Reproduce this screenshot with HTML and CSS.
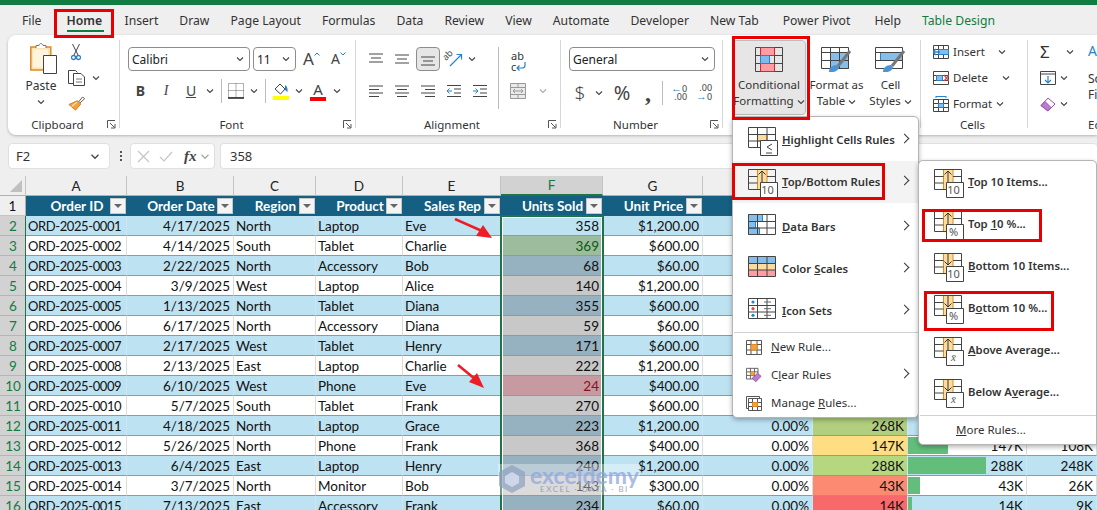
FILE: index.html
```html
<!DOCTYPE html>
<html>
<head>
  <meta charset="utf-8">
  <title>Conditional Formatting</title>
  <link rel="stylesheet" href="styles.css">
</head>
<body>
<svg class="defs" width="0" height="0">
  <defs>
    <symbol id="chev" viewBox="0 0 8 6"><path d="M1 1.5 4 4.5 7 1.5" fill="none" stroke="#444" stroke-width="1.1"/></symbol>
    <symbol id="launch" viewBox="0 0 9 9"><path d="M.5 8V.5H8M3 3l4.5 4.5M4 8h4V4" fill="none" stroke="#555"/></symbol>
    <symbol id="lines-left" viewBox="0 0 16 12"><path d="M1 1h14M1 4.5h10M1 8h14M1 11.500h10" stroke="#444"/></symbol>
    <symbol id="lines-center" viewBox="0 0 16 12"><path d="M1 1h14M3 4.500h10M1 8h14M3 11.500h10" stroke="#444"/></symbol>
    <symbol id="lines-right" viewBox="0 0 16 12"><path d="M1 1h14M5 4.500h10M1 8h14M5 11.500h10" stroke="#444"/></symbol>
    <symbol id="grid" viewBox="0 0 30 30"><path d="M.5.5h27v20H.5zM.5 7.500h27M.5 14h27M9.500.5v20M19 .5v20" fill="none" stroke="#444"/></symbol>
    <symbol id="top-col" viewBox="0 0 30 30"><path d="M9.500.5h9.500v20H9.500z" fill="#fbdc9c" stroke="#e78a1e"/><path d="M.5.5h27v20H.5zM.5 7.500h9M.5 14h9M19 7.500h8M19 14h8" fill="none" stroke="#444"/><path d="M14 13V2M10.500 5.500 14 2l3.500 3.500" fill="none" stroke="#333"/><path d="M12.500 13.500h17v15h-17z" fill="#fff" stroke="#444"/></symbol>
    <symbol id="bottom-col" viewBox="0 0 30 30"><path d="M9.500.5h9.500v20H9.500z" fill="#fbdc9c" stroke="#e78a1e"/><path d="M.5.5h27v20H.5zM.5 7.500h9M.5 14h9M19 7.500h8M19 14h8" fill="none" stroke="#444"/><path d="M14 1v11M10.500 8.500 14 12l3.500-3.500" fill="none" stroke="#333"/><path d="M12.500 13.500h17v15h-17z" fill="#fff" stroke="#444"/></symbol>
  </defs>
</svg>

<div class="topbar"></div>

<nav class="tabs">
  <span>File</span>
  <span class="tab-on">Home</span>
  <span>Insert</span>
  <span>Draw</span>
  <span>Page Layout</span>
  <span>Formulas</span>
  <span>Data</span>
  <span>Review</span>
  <span>View</span>
  <span>Automate</span>
  <span>Developer</span>
  <span>New Tab</span>
  <span class="tab-far">Power Pivot</span>
  <span class="tab-far">Help</span>
  <span class="tab-green">Table Design</span>
</nav>

<div class="ribbon">
  <!-- Clipboard -->
  <section class="group g-clip">
    <div class="group-body clip-body">
      <div class="paste">
        <svg class="paste-ico" width="27" height="31" viewBox="0 0 27 31">
          <path d="M.8 4h20v23H.8z" fill="#fbe3b8" stroke="#e08a23" stroke-width="1.500"/>
          <path d="M3 6.500h15v18H3z" fill="#fff4dd"/>
          <path d="M6 5V2.500h3C9 0 13 0 13 2.500h3V5" fill="#fff" stroke="#777"/>
          <path d="M13.500 12.500h13v18h-13z" fill="#fff" stroke="#444"/>
        </svg>
        <span class="paste-text">Paste</span>
        <svg class="chev" width="8" height="6"><use href="#chev"/></svg>
      </div>
      <div class="clip-tools">
        <div class="tool">
          <svg class="scissors" width="10" height="17" viewBox="0 0 10 17"><path d="M1.500 0l5.500 11M8.500 0 3 11" stroke="#444" fill="none"/><circle cx="2.500" cy="13.500" r="2" fill="none" stroke="#2a82c9" stroke-width="1.300"/><circle cx="7.500" cy="13.500" r="2" fill="none" stroke="#2a82c9" stroke-width="1.300"/></svg>
        </div>
        <div class="tool">
          <svg width="17" height="16" viewBox="0 0 17 16"><path d="M5 13.500H.5V.5h7l2 2" fill="none" stroke="#444"/><path d="M5.500 3.500h7.500l3.500 3.500v8.500h-11z" fill="#fff" stroke="#444"/><path d="M8 9h6M8 12h6" stroke="#777"/></svg>
          <svg class="chev" width="8" height="6"><use href="#chev"/></svg>
        </div>
        <div class="tool">
          <svg width="17" height="16" viewBox="0 0 18 16"><path d="M11 6 15.500.5 17.500 2.500 12 7.500z" fill="#fff" stroke="#555"/><path d="M10 4.500 13.500 8 8 14.500 1 8.500z" fill="#f3a33c" stroke="#d9791a"/><path d="M4 10.500 9.500 6" stroke="#fff"/></svg>
        </div>
      </div>
    </div>
    <div class="group-label"><span>Clipboard</span><svg width="9" height="9"><use href="#launch"/></svg></div>
  </section>
  <i class="sep"></i>

  <!-- Font -->
  <section class="group g-font">
    <div class="group-body font-body">
      <div class="font-row">
        <div class="combo combo-font"><span>Calibri</span><svg width="8" height="6"><use href="#chev"/></svg></div>
        <div class="combo combo-size"><span>11</span><svg width="8" height="6"><use href="#chev"/></svg></div>
        <span class="grow">A<svg width="6" height="4" viewBox="0 0 6 4"><path d="M.5 3.500 3 1l2.500 2.500" fill="none" stroke="#2a82c9"/></svg></span>
        <span class="shrink">A<svg width="6" height="4" viewBox="0 0 6 4"><path d="M.5.5 3 3 5.500.5" fill="none" stroke="#2a82c9"/></svg></span>
      </div>
      <div class="font-tools">
        <b class="ft">B</b>
        <i class="ft ft-i">I</i>
        <u class="ft ft-u">U</u>
        <svg class="ft-c" width="8" height="6"><use href="#chev"/></svg>
        <i class="vsep"></i>
        <svg class="ft-c" width="16" height="16" viewBox="0 0 16 16"><path d="M.5.5h15v14H.5z" fill="none" stroke="#666" stroke-dasharray="1 1"/><path d="M8 .5v14M.5 7.500h15" stroke="#666" stroke-dasharray="1 1"/><path d="M0 15h16" stroke="#222" stroke-width="1.500"/></svg>
        <svg class="ft-c" width="8" height="6"><use href="#chev"/></svg>
        <i class="vsep"></i>
        <svg class="ft-c" width="16" height="18" viewBox="0 0 16 18"><path d="M2 7 7 2l5 5-4.500 5z" fill="#fff" stroke="#444"/><path d="M12 3c2 1 3 4 2.500 7L12 8z" fill="#2a82c9"/><rect y="14" width="16" height="4" fill="#ffff00"/></svg>
        <svg class="ft-c" width="8" height="6"><use href="#chev"/></svg>
        <span class="ft-color">A</span>
        <svg class="ft-c" width="8" height="6"><use href="#chev"/></svg>
      </div>
    </div>
    <div class="group-label"><span>Font</span><svg width="9" height="9"><use href="#launch"/></svg></div>
  </section>
  <i class="sep"></i>

  <!-- Alignment -->
  <section class="group g-align">
    <div class="group-body align-body">
      <div class="align-grid">
        <div class="ai ai-top"><svg width="16" height="10" viewBox="0 0 16 10"><path d="M1 1h14M3 5h10M1 9h14" stroke="#444"/></svg></div>
        <div class="ai"><svg width="16" height="10" viewBox="0 0 16 10"><path d="M1 1h14M3 5h10M1 9h14" stroke="#444"/></svg></div>
        <div class="ai ai-on"><svg width="16" height="10" viewBox="0 0 16 10"><path d="M1 1h14M3 5h10M1 9h14" stroke="#444"/></svg></div>
        <div class="ai ai-wide">
          <svg class="orient" width="18" height="16" viewBox="0 0 18 16"><path d="M5 15 16 4M11.500 3.500h5v5" fill="none" stroke="#2a82c9" stroke-width="1.200"/><text x="1" y="10" class="svg-ab" transform="rotate(-45 1 10)">ab</text></svg>
          <svg width="8" height="6"><use href="#chev"/></svg>
        </div>
        <div class="ai"><svg width="16" height="12"><use href="#lines-left"/></svg></div>
        <div class="ai"><svg width="16" height="12"><use href="#lines-center"/></svg></div>
        <div class="ai"><svg width="16" height="12"><use href="#lines-right"/></svg></div>
        <div class="ai"><svg width="16" height="12" viewBox="0 0 16 12"><path d="M1 .5h14M8 4h7M8 8h7M1 11.500h14" stroke="#444"/><path d="M6 6H1M3.500 3.500 1 6l2.500 2.500" fill="none" stroke="#2a82c9"/></svg></div>
        <div class="ai"><svg width="16" height="12" viewBox="0 0 16 12"><path d="M1 .5h14M8 4h7M8 8h7M1 11.500h14" stroke="#444"/><path d="M1 6h5M3.500 3.500 6 6 3.500 8.500" fill="none" stroke="#2a82c9"/></svg></div>
      </div>
      <i class="vsep vsep-tall"></i>
      <div class="wrap-col">
        <div class="wrap-txt">ab<br>c<svg width="10" height="10" viewBox="0 0 10 10"><path d="M9 1v3.500C9 6.500 7.500 7 6 7H1M3.500 4.500 1 7l2.500 2.500" fill="none" stroke="#2a82c9" stroke-width="1.200"/></svg></div>
        <div class="merge">
          <svg width="16" height="16" viewBox="0 0 16 16"><path d="M.5.5h15v15H.5zM.5 4.500h15M.5 11.500h15" fill="#eaeaea" stroke="#999"/><path d="M8 .5v4M8 11.500v4" stroke="#999"/><path d="M3 8h10M5 6 3 8l2 2M11 6l2 2-2 2" fill="none" stroke="#999"/></svg>
          <svg width="8" height="6" class="faded"><use href="#chev"/></svg>
        </div>
      </div>
    </div>
    <div class="group-label"><span>Alignment</span><svg width="9" height="9"><use href="#launch"/></svg></div>
  </section>
  <i class="sep"></i>

  <!-- Number -->
  <section class="group g-number">
    <div class="group-body font-body">
      <div class="combo combo-num"><span>General</span><svg width="8" height="6"><use href="#chev"/></svg></div>
      <div class="num-tools">
        <span class="nt nt-big">$</span>
        <svg width="8" height="6"><use href="#chev"/></svg>
        <span class="nt nt-pct">%</span>
        <span class="nt nt-comma">,</span>
        <i class="vsep"></i>
        <span class="dec"><span><em>&larr;</em>0</span><span>.00</span></span>
        <span class="dec"><span>.00</span><span><em>&rarr;</em>0</span></span>
      </div>
    </div>
    <div class="group-label"><span>Number</span><svg width="9" height="9"><use href="#launch"/></svg></div>
  </section>
  <i class="sep"></i>

  <!-- Styles -->
  <section class="group g-styles">
    <div class="styles-body">
      <div class="big-btn big-on">
        <svg width="28" height="25" viewBox="0 0 28 25">
          <path d="M5.500 .5h14v8h-14z" fill="#ff9da3"/>
          <path d="M5.500 8.500h9v8h-9z" fill="#7fbaec"/>
          <path d="M5.500 16.500h14v8h-14z" fill="#ff9da3"/>
          <path d="M.5.500h27v24H.5zM.5 8.500h27M.5 16.500h27M5.500 .5v24M19.500 .5v24" fill="none" stroke="#444"/>
          <path d="M5.500 .5h14v8h-14zM5.500 16.500h14v8h-14z" fill="none" stroke="#d8232a"/>
          <path d="M5.500 8.500h9v8h-9z" fill="none" stroke="#2a82c9"/>
        </svg>
        <span class="big-text">Conditional<br>Formatting <svg width="8" height="6"><use href="#chev"/></svg></span>
      </div>
      <div class="big-btn big-fat">
        <svg width="32" height="25" viewBox="0 0 32 25">
          <path d="M9.500 5.500h18v16h-18z" fill="#85bdeb" stroke="#2a82c9"/>
          <path d="M.5.500h27v21H.5zM.5 5.500h27M.5 13.500h27M9.500 .5v21M18.500 .5v21" fill="none" stroke="#444"/>
          <path d="M17 19 29 4" stroke="#777" stroke-width="3"/><path d="M8 25c0-4 3-7 8-7l2 2c0 3-4 6-10 5z" fill="#4a94d6"/>
        </svg>
        <span class="big-text">Format as<br>Table <svg width="8" height="6"><use href="#chev"/></svg></span>
      </div>
      <div class="big-btn big-fat">
        <svg width="32" height="25" viewBox="0 0 32 25">
          <path d="M5.500 5.500h22v8h-22z" fill="#85bdeb" stroke="#2a82c9"/>
          <path d="M.5.500h27v21H.5zM.5 5.500h27M.5 13.500h27" fill="none" stroke="#444"/>
          <path d="M17 19 29 4" stroke="#777" stroke-width="3"/><path d="M8 25c0-4 3-7 8-7l2 2c0 3-4 6-10 5z" fill="#4a94d6"/>
        </svg>
        <span class="big-text">Cell<br>Styles <svg width="8" height="6"><use href="#chev"/></svg></span>
      </div>
    </div>
    <div class="group-label"></div>
  </section>
  <i class="sep"></i>

  <!-- Cells -->
  <section class="group g-cells">
    <div class="cells-body">
      <div class="cell-row">
        <svg width="16" height="14" viewBox="0 0 16 14"><path d="M.5.5h15v13H.5zM.5 4.500h15M.5 9.500h15M5.500 .5v13M10.500 .5v13" fill="#fff" stroke="#444"/><path d="M5.500 4.500h10v5h-10z" fill="#85bdeb" stroke="#2a82c9"/><path d="M7 7H0M3 4 0 7l3 3" fill="none" stroke="#2a82c9" stroke-width="1.300"/></svg>
        <span>Insert</span><svg class="cell-chev" width="8" height="6"><use href="#chev"/></svg>
      </div>
      <div class="cell-row">
        <svg width="16" height="14" viewBox="0 0 16 14"><path d="M.5.5h15v13H.5zM.5 4.500h15M.5 9.500h15" fill="#fff" stroke="#444"/><path d="M3.500 4.500h6v5h-6z" fill="#85bdeb" stroke="#2a82c9"/><path d="M11 4l5 6M16 4l-5 6" stroke="#e0484d" stroke-width="1.200"/></svg>
        <span>Delete</span><svg class="cell-chev cell-chev-far" width="8" height="6"><use href="#chev"/></svg>
      </div>
      <div class="cell-row">
        <svg width="16" height="16" viewBox="0 0 16 16"><path d="M3 .5h10M3 0v2M13 0v2" stroke="#2a82c9"/><path d="M.5 3.500h15v12H.5zM.5 7.500h15M.5 11.500h15M5.500 3.500v12M10.500 3.500v12" fill="#fff" stroke="#444"/><path d="M5.500 7.500h5v4h-5z" fill="#85bdeb" stroke="#2a82c9"/></svg>
        <span>Format</span><svg class="cell-chev-near" width="8" height="6"><use href="#chev"/></svg>
      </div>
    </div>
    <div class="group-label group-label-plain"><span>Cells</span></div>
  </section>
  <i class="sep"></i>

  <!-- Editing, cut off by the window -->
  <section class="group g-edit">
    <div class="edit-body">
      <div class="edit-col">
        <div class="edit-row"><span class="sigma">&Sigma;</span><svg width="8" height="6"><use href="#chev"/></svg></div>
        <div class="edit-row">
          <svg width="16" height="14" viewBox="0 0 16 14"><path d="M.5.5h15v13H.5zM.5 3h15" fill="#fff" stroke="#444"/><path d="M8 5v7M5 9l3 3 3-3" fill="none" stroke="#2a82c9" stroke-width="1.200"/></svg>
          <svg width="8" height="6"><use href="#chev"/></svg>
        </div>
        <div class="edit-row">
          <svg width="16" height="15" viewBox="0 0 16 15"><path d="M1 8.500 8 1l7 6-7 7z" fill="#fff" stroke="#a24cb8"/><path d="M1 8.500 5 4.500l6 6L8 14z" fill="#b77fcb" stroke="#a24cb8"/></svg>
          <svg width="8" height="6"><use href="#chev"/></svg>
        </div>
      </div>
      <div class="sort-col">
        <span class="sort-a">A</span>
        <span class="sort-text">So<br>Fi</span>
      </div>
    </div>
    <div class="group-label group-label-edit"><span>Ed</span></div>
  </section>
</div>

<div class="formula-bar">
  <div class="name-box"><span>F2</span><svg width="10" height="7"><use href="#chev"/></svg></div>
  <div class="dots"><i></i><i></i><i></i></div>
  <div class="fx-box">
    <svg width="13" height="13" viewBox="0 0 13 13"><path d="M1 1l11 11M12 1 1 12" stroke="#c6c6c6" stroke-width="1.200"/></svg>
    <svg width="14" height="11" viewBox="0 0 14 11"><path d="M1 6l4 4 8-9" fill="none" stroke="#c6c6c6" stroke-width="1.200"/></svg>
    <span class="fx">fx</span>
    <svg width="10" height="7" class="faded"><use href="#chev"/></svg>
  </div>
  <div class="formula-input">358</div>
</div>

<table class="sheet">
  <colgroup>
    <col class="c-head"><col class="c-a"><col class="c-b"><col class="c-c"><col class="c-d"><col class="c-e">
    <col class="c-f"><col class="c-g"><col class="c-h"><col class="c-i"><col class="c-j"><col class="c-k">
  </colgroup>
  <thead>
    <tr class="letters">
      <th class="corner"><span></span></th>
      <th>A</th><th>B</th><th>C</th><th>D</th><th>E</th><th class="sel-col">F</th><th>G</th><th>H</th><th>I</th><th>J</th><th>K</th>
    </tr>
    <tr class="titles">
      <th class="rownum rownum-plain">1</th>
      <th><div class="tt"><span>Order ID</span><b class="fb"></b></div></th>
      <th><div class="tt"><span>Order Date</span><b class="fb"></b></div></th>
      <th><div class="tt"><span>Region</span><b class="fb"></b></div></th>
      <th><div class="tt"><span>Product</span><b class="fb"></b></div></th>
      <th><div class="tt"><span>Sales Rep</span><b class="fb"></b></div></th>
      <th><div class="tt"><span>Units Sold</span><b class="fb"></b></div></th>
      <th><div class="tt"><span>Unit Price</span><b class="fb"></b></div></th>
      <th></th><th></th><th></th><th></th>
    </tr>
  </thead>
  <tbody>
    <tr class="band"><th class="rownum">2</th><td class="id">ORD-2025-0001</td><td class="r">4/17/2025</td><td>North</td><td>Laptop</td><td>Eve</td><td class="r u-active">358</td><td class="r">$1,200.00</td><td></td><td></td><td></td><td></td></tr>
    <tr><th class="rownum">3</th><td class="id">ORD-2025-0002</td><td class="r">4/14/2025</td><td>South</td><td>Tablet</td><td>Charlie</td><td class="r u-top">369</td><td class="r">$600.00</td><td></td><td></td><td></td><td></td></tr>
    <tr class="band"><th class="rownum">4</th><td class="id">ORD-2025-0003</td><td class="r">2/22/2025</td><td>North</td><td>Accessory</td><td>Bob</td><td class="r u">68</td><td class="r">$60.00</td><td></td><td></td><td></td><td></td></tr>
    <tr><th class="rownum">5</th><td class="id">ORD-2025-0004</td><td class="r">3/9/2025</td><td>West</td><td>Laptop</td><td>Alice</td><td class="r u">140</td><td class="r">$1,200.00</td><td></td><td></td><td></td><td></td></tr>
    <tr class="band"><th class="rownum">6</th><td class="id">ORD-2025-0005</td><td class="r">1/13/2025</td><td>North</td><td>Tablet</td><td>Diana</td><td class="r u">355</td><td class="r">$600.00</td><td></td><td></td><td></td><td></td></tr>
    <tr><th class="rownum">7</th><td class="id">ORD-2025-0006</td><td class="r">6/17/2025</td><td>North</td><td>Accessory</td><td>Diana</td><td class="r u">59</td><td class="r">$60.00</td><td></td><td></td><td></td><td></td></tr>
    <tr class="band"><th class="rownum">8</th><td class="id">ORD-2025-0007</td><td class="r">2/17/2025</td><td>West</td><td>Tablet</td><td>Henry</td><td class="r u">171</td><td class="r">$600.00</td><td></td><td></td><td></td><td></td></tr>
    <tr><th class="rownum">9</th><td class="id">ORD-2025-0008</td><td class="r">2/13/2025</td><td>East</td><td>Laptop</td><td>Charlie</td><td class="r u">222</td><td class="r">$1,200.00</td><td></td><td></td><td></td><td></td></tr>
    <tr class="band"><th class="rownum">10</th><td class="id">ORD-2025-0009</td><td class="r">6/10/2025</td><td>West</td><td>Phone</td><td>Eve</td><td class="r u-low">24</td><td class="r">$400.00</td><td></td><td></td><td></td><td></td></tr>
    <tr><th class="rownum">11</th><td class="id">ORD-2025-0010</td><td class="r">5/7/2025</td><td>South</td><td>Tablet</td><td>Frank</td><td class="r u">270</td><td class="r">$600.00</td><td></td><td></td><td></td><td></td></tr>
    <tr class="band"><th class="rownum">12</th><td class="id">ORD-2025-0011</td><td class="r">4/18/2025</td><td>North</td><td>Laptop</td><td>Grace</td><td class="r u">223</td><td class="r">$1,200.00</td><td class="r">0.00%</td><td class="r s-268">268K</td><td class="r"></td><td class="r"></td></tr>
    <tr><th class="rownum">13</th><td class="id">ORD-2025-0012</td><td class="r">5/26/2025</td><td>North</td><td>Phone</td><td>Frank</td><td class="r u">368</td><td class="r">$400.00</td><td class="r">0.00%</td><td class="r s-147">147K</td><td class="r bar" style="background-size: 40px 17px">147K</td><td class="r">108K</td></tr>
    <tr class="band"><th class="rownum">14</th><td class="id">ORD-2025-0013</td><td class="r">6/4/2025</td><td>East</td><td>Laptop</td><td>Henry</td><td class="r u">240</td><td class="r">$1,200.00</td><td class="r">0.00%</td><td class="r s-288">288K</td><td class="r bar" style="background-size: 78px 17px">288K</td><td class="r">248K</td></tr>
    <tr><th class="rownum">15</th><td class="id">ORD-2025-0014</td><td class="r">3/7/2025</td><td>North</td><td>Monitor</td><td>Bob</td><td class="r u">143</td><td class="r">$300.00</td><td class="r">0.00%</td><td class="r s-43">43K</td><td class="r bar" style="background-size: 12px 17px">43K</td><td class="r">26K</td></tr>
    <tr class="band"><th class="rownum">16</th><td class="id">ORD-2025-0015</td><td class="r">7/13/2025</td><td>East</td><td>Accessory</td><td>Frank</td><td class="r u">234</td><td class="r">$60.00</td><td class="r">0.00%</td><td class="r s-14">14K</td><td class="r bar" style="background-size: 4px 17px">14K</td><td class="r">9K</td></tr>
  </tbody>
</table>

<!-- selection frame around column F -->
<div class="selection"></div>
<div class="row-edge"></div>

<!-- watermark -->
<div class="watermark">
  <svg width="28" height="30" viewBox="0 0 28 30"><path d="M14 1 27 8v14l-13 7L1 22V8z" fill="#8fa0bd" opacity=".7"/><path d="M14 8l7 4v7l-7 4-7-4v-7z" fill="#d7e1f1" opacity=".8"/></svg>
  <div class="wm-text"><span class="wm-name">exceldemy</span><span class="wm-sub">EXCEL &middot; DATA &middot; BI</span></div>
</div>

<!-- red arrows drawn on the screenshot -->
<svg class="arrow arrow-one" width="42" height="22" viewBox="0 0 42 22"><path d="M1 1 28 13" stroke="#ee1c25" stroke-width="2.500"/><path d="M38 20 22 18 29 7z" fill="#ee1c25"/></svg>
<svg class="arrow arrow-two" width="30" height="26" viewBox="0 0 30 26"><path d="M1 1 18 15" stroke="#ee1c25" stroke-width="2.500"/><path d="M27 24 12 18 20 9z" fill="#ee1c25"/></svg>

<!-- Conditional Formatting menu -->
<div class="menu">
  <div class="m-item">
    <svg class="m-ico" width="32" height="30" viewBox="0 0 30 30"><path d="M9.500 7.500h9.500V14H9.500z" fill="#fbdc9c" stroke="#e78a1e"/><use href="#grid"/><path d="M12.500 13.500h17v15h-17z" fill="#fff" stroke="#444"/><path d="M24 17l-5 3 5 3M18 26h6" fill="none" stroke="#444"/></svg>
    <span class="m-text"><u>H</u>ighlight Cells Rules</span><span class="m-arrow"></span>
  </div>
  <div class="m-item m-hover">
    <svg class="m-ico" width="32" height="30"><use href="#top-col"/></svg><b class="badge">10</b>
    <span class="m-text"><u>T</u>op/Bottom Rules</span><span class="m-arrow"></span>
  </div>
  <div class="m-item">
    <svg class="m-ico" width="32" height="30" viewBox="0 0 30 30"><path d="M.5.5h14v7H.5zM.5 7.500h7v7H.5zM.5 14h11v6.500H.5z" fill="#85bdeb" stroke="#2a82c9"/><use href="#grid"/></svg>
    <span class="m-text"><u>D</u>ata Bars</span><span class="m-arrow"></span>
  </div>
  <div class="m-item">
    <svg class="m-ico" width="32" height="30" viewBox="0 0 30 30"><path d="M.5.5h27v7H.5z" fill="#85bdeb"/><path d="M.5 7.500h27V14H.5z" fill="#fbdc9c"/><path d="M.5 14h27v6.500H.5z" fill="#ff9da3"/><use href="#grid"/></svg>
    <span class="m-text">Color <u>S</u>cales</span><span class="m-arrow"></span>
  </div>
  <div class="m-item">
    <svg class="m-ico" width="32" height="30" viewBox="0 0 30 30"><use href="#grid"/><circle cx="5" cy="4" r="1.600" fill="#2a82c9"/><circle cx="5" cy="10.700" r="1.600" fill="#e0484d"/><circle cx="5" cy="17.300" r="1.600" fill="#2a82c9"/><path d="M16 4h7M16 10.700h7M16 17.300h7" stroke="#666"/></svg>
    <span class="m-text"><u>I</u>con Sets</span><span class="m-arrow"></span>
  </div>
  <div class="m-line"></div>
  <div class="m-small">
    <svg width="16" height="15" viewBox="0 0 16 15"><path d="M.5.5h15v14H.5zM.5 4.500h15M.5 10h15M5 .5v14M11 .5v14" fill="#fff" stroke="#555"/><path d="M5 4.500h6V10H5z" fill="#f2a33a" stroke="#e78a1e"/></svg>
    <span class="m-small-text"><u>N</u>ew Rule...</span>
  </div>
  <div class="m-small">
    <svg width="16" height="16" viewBox="0 0 18 16"><path d="M.5.5h13v12H.5zM.5 4.500h13M.5 8.500h13M5 .5v12M9.500 .5v12" fill="#fff" stroke="#555"/><path d="M5 4.500h4.500v4H5z" fill="#f2a33a"/><path d="M7 11.500 13 6l4 3.500-6 6z" fill="#b77fcb" stroke="#a24cb8"/></svg>
    <span class="m-small-text">C<u>l</u>ear Rules</span><span class="m-arrow"></span>
  </div>
  <div class="m-small">
    <svg width="16" height="15" viewBox="0 0 16 15"><path d="M.5.5h13v12h-13z" fill="none" stroke="#555"/><path d="M2.500 2.500h13v12h-13zM2.500 6.500h13M2.500 10.500h13M6.500 2.500v12M11.500 2.500v12" fill="#fff" stroke="#555"/><path d="M6.500 6.500h5v4h-5z" fill="#f2a33a" stroke="#e78a1e"/></svg>
    <span class="m-small-text">Manage <u>R</u>ules...</span>
  </div>
</div>

<!-- Top/Bottom Rules submenu -->
<div class="submenu">
  <div class="m-item"><svg class="m-ico" width="32" height="30"><use href="#top-col"/></svg><b class="badge">10</b><span class="m-text"><u>T</u>op 10 Items...</span></div>
  <div class="m-item"><svg class="m-ico" width="32" height="30"><use href="#top-col"/></svg><b class="badge">%</b><span class="m-text">Top <u>1</u>0 %...</span></div>
  <div class="m-item"><svg class="m-ico" width="32" height="30"><use href="#bottom-col"/></svg><b class="badge">10</b><span class="m-text"><u>B</u>ottom 10 Items...</span></div>
  <div class="m-item"><svg class="m-ico" width="32" height="30"><use href="#bottom-col"/></svg><b class="badge">%</b><span class="m-text">B<u>o</u>ttom 10 %...</span></div>
  <div class="m-item"><svg class="m-ico" width="32" height="30"><use href="#top-col"/></svg><b class="badge badge-x">x&#772;</b><span class="m-text"><u>A</u>bove Average...</span></div>
  <div class="m-item"><svg class="m-ico" width="32" height="30"><use href="#bottom-col"/></svg><b class="badge badge-x">x&#772;</b><span class="m-text">Below A<u>v</u>erage...</span></div>
  <div class="m-line s-line"></div>
  <div class="s-more"><u>M</u>ore Rules...</div>
</div>

<!-- red boxes marked on the screenshot -->
<div class="mark mark-home"></div>
<div class="mark mark-cf"></div>
<div class="mark mark-topbottom"></div>
<div class="mark mark-top10"></div>
<div class="mark mark-bottom10"></div>
</body>
</html>
```

FILE: styles.css
```css
* {
  box-sizing: border-box;
}

html, body {
  margin: 0;
  height: 510px;
  overflow: hidden;
}

body {
  position: relative;
  width: 1097px;
  background-color: #efefef;
  color: #333;
  font-family: "Noto Sans", "Open Sans", sans-serif;
  font-size: 12px;
}

.defs {
  position: absolute;
}

.topbar {
  height: 5px;
  background-color: #107c41;
}

/* tabs */
.tabs {
  display: flex;
  gap: 21px;
  height: 30px;
  padding: 7px 0 0 22px;
  font-size: 12.200px;
  line-height: 17px;
  white-space: nowrap;
}

.tab-on {
  position: relative;
  min-width: 37px;
  margin-left: 4px;
  font-weight: 600;
}

.tab-on::after {
  content: "";
  position: absolute;
  left: 0;
  right: 0;
  top: 18px;
  height: 2px;
  background-color: #107c41;
}

.tab-far {
  margin-left: 3px;
}

.tab-green {
  color: #107c41;
}

/* ribbon */
.ribbon {
  display: flex;
  height: 100px;
  margin-left: 8px;
  background-color: #fff;
  border-radius: 8px 0 0 8px;
  box-shadow: 0 1px 3px rgba(0, 0, 0, .25);
  overflow: hidden;
}

.sep {
  flex: none;
  width: 1px;
  margin: 5px 0 7px;
  background-color: #d6d6d6;
}

.vsep {
  display: block;
  flex: none;
  width: 1px;
  height: 24px;
  background-color: #bcbcbc;
  justify-self: center;
}

.group {
  flex: none;
  display: flex;
  flex-direction: column;
}

.g-clip { width: 111px; }
.g-font { width: 235px; }
.g-align { width: 204px; }
.g-number { width: 161px; }
.g-styles { width: 197px; }
.g-cells { width: 106px; }
.g-edit { width: 70px; }

.group-body {
  height: 81px;
}

.group-label {
  display: flex;
  align-items: center;
  height: 18px;
  padding: 0 3px 2px 0;
  font-size: 11.500px;
  white-space: nowrap;
}

.group-label span {
  flex: 1;
  text-align: center;
}

.group-label-edit span {
  flex: none;
  padding-left: 60px;
}

/* clipboard */
.clip-body {
  display: flex;
  padding-left: 16px;
}

.paste {
  display: flex;
  flex-direction: column;
  align-items: center;
  width: 34px;
  padding-top: 8px;
}

.paste-ico {
  margin-left: 5px;
}

.paste-text {
  margin-top: 3px;
  line-height: 17px;
}

.chev {
  flex: none;
}

.paste .chev {
  margin-top: 5px;
}

.clip-tools {
  display: grid;
  grid-template-rows: repeat(3, 26px);
  padding: 4px 0 0 10px;
}

.tool {
  display: flex;
  align-items: center;
  gap: 7px;
}

.scissors {
  margin-left: 3px;
}

/* font */
.font-body {
  padding: 12px 0 0 8px;
}

.font-row {
  display: flex;
  align-items: center;
  height: 24px;
}

.combo {
  display: flex;
  align-items: center;
  justify-content: space-between;
  height: 24px;
  padding: 0 5px 0 3px;
  background-color: #fff;
  border: 1px solid #8d8d8d;
  border-radius: 4px;
  color: #222;
}

.combo-font { width: 122px; }
.combo-size { width: 43px; margin-left: 3px; }
.combo-num { width: 146px; }

.grow, .shrink {
  display: flex;
  color: #444;
  line-height: 20px;
}

.grow {
  margin-left: 7px;
  font-size: 17px;
}

.grow svg, .shrink svg {
  margin-top: 3px;
}

.shrink {
  margin-left: 11px;
  font-size: 14px;
}

.font-tools {
  display: grid;
  grid-template-columns: 25px 26px 24px 14px 8px 22px 14px 8px 23px 14px 24px 14px;
  align-items: center;
  justify-items: center;
  height: 24px;
  margin-top: 8px;
}

.ft {
  font-size: 14px;
  color: #444;
  line-height: 20px;
}

.ft-i {
  font-family: "Liberation Serif", serif;
}

.ft-color {
  width: 16px;
  border-bottom: 4px solid #ff0000;
  color: #444;
  font-size: 15px;
  line-height: 16px;
  text-align: center;
}

/* alignment */
.align-body {
  display: flex;
  padding: 12px 0 0 7px;
}

.align-grid {
  flex: none;
  display: grid;
  grid-template-columns: repeat(5, 26px);
  grid-template-rows: 24px 24px;
  row-gap: 8px;
}

.ai {
  display: flex;
  align-items: center;
  justify-content: center;
}

.ai-top {
  padding-bottom: 3px;
}

.ai-on {
  margin: 0 1px;
  padding-top: 3px;
  background-color: #e6e6e6;
  border: 1px solid #8d8d8d;
  border-radius: 4px;
}

.ai-wide {
  grid-column: span 2;
  justify-content: flex-start;
  gap: 5px;
  padding-left: 4px;
}

.orient {
  overflow: visible;
}

.svg-ab {
  font-size: 9px;
  fill: #444;
}

.vsep-tall {
  height: 62px;
  margin-left: 5px;
}

.wrap-col {
  flex: none;
  padding-left: 11px;
}

.wrap-txt {
  height: 30px;
  padding: 4px 0 0 1px;
  font-size: 11px;
  line-height: 10px;
}

.merge {
  display: flex;
  align-items: center;
  gap: 13px;
  height: 24px;
  margin-top: 2px;
}

.faded {
  opacity: .45;
}

/* number */
.num-tools {
  display: grid;
  grid-template-columns: 22px 16px 30px 22px 6px 28px 22px;
  align-items: center;
  justify-items: center;
  height: 24px;
  margin-top: 8px;
}

.nt {
  color: #444;
}

.nt-big {
  font-size: 19px;
  font-weight: 300;
}

.nt-pct {
  font-size: 20px;
}

.nt-comma {
  font-size: 24px;
  font-weight: 700;
  line-height: 14px;
  font-family: "Liberation Serif", serif;
}

.dec {
  display: flex;
  flex-direction: column;
  align-items: flex-end;
  font-size: 9px;
  line-height: 8px;
  color: #444;
}

.dec em {
  color: #2a82c9;
  font-style: normal;
  font-size: 11px;
}

/* styles */
.styles-body {
  display: flex;
  height: 81px;
  padding: 5px 0 0 9px;
}

.big-btn {
  display: flex;
  flex-direction: column;
  align-items: center;
  flex: none;
  height: 75px;
  padding-top: 7px;
  text-align: center;
}

.big-on {
  width: 74px;
  padding-top: 6px;
  background-color: #e6e6e6;
  border: 1px solid #bdbdbd;
  border-radius: 4px;
}

.big-fat {
  width: 53px;
  margin-left: 1px;
}

.big-on + .big-fat {
  margin-left: 4px;
}

.big-text {
  margin-top: 5px;
  font-size: 11.500px;
  line-height: 16px;
  white-space: nowrap;
}

/* cells */
.cells-body {
  display: grid;
  grid-template-rows: repeat(3, 26px);
  height: 81px;
  padding: 4px 0 0 12px;
}

.cell-row {
  display: flex;
  align-items: center;
  gap: 4px;
  font-size: 11.500px;
}

.cell-row span {
  margin-top: -2px;
}

.cell-chev {
  margin-left: auto;
  margin-right: 21px;
}

.cell-chev-far {
  margin-right: 17px;
}

/* editing */
.edit-body {
  display: flex;
  height: 81px;
}

.edit-col {
  flex: none;
  display: grid;
  grid-template-rows: repeat(3, 26px);
  padding: 4px 0 0 12px;
}

.edit-row {
  display: flex;
  align-items: center;
  gap: 4px;
}

.sigma {
  width: 22px;
  font-size: 17px;
  line-height: 20px;
}

.sort-col {
  display: flex;
  flex-direction: column;
  padding-left: 14px;
}

.sort-a {
  height: 36px;
  padding-top: 6px;
  color: #2a82c9;
  font-size: 14px;
}

.sort-text {
  line-height: 16px;
}

/* formula bar */
.formula-bar {
  display: flex;
  align-items: stretch;
  height: 26px;
  margin: 8px 0 7px 8px;
}

.name-box, .fx-box, .formula-input {
  background-color: #fff;
  border: 1px solid #e0e0e0;
  border-radius: 4px;
}

.name-box {
  display: flex;
  align-items: center;
  justify-content: space-between;
  width: 102px;
  padding: 0 9px 0 7px;
  font-size: 13px;
}

.dots {
  display: flex;
  flex-direction: column;
  justify-content: center;
  gap: 2px;
  width: 20px;
  padding-left: 10px;
}

.dots i {
  width: 2px;
  height: 2px;
  background-color: #555;
}

.fx-box {
  display: flex;
  align-items: center;
  gap: 9px;
  width: 85px;
  padding-left: 6px;
}

.fx {
  margin-left: 2px;
  margin-right: -6px;
  font-family: "Liberation Serif", serif;
  font-size: 15px;
  font-style: italic;
  font-weight: 700;
  color: #444;
}

.formula-input {
  flex: 1;
  margin-left: 5px;
  padding-left: 9px;
  border-right: 0;
  font-size: 13px;
  line-height: 24px;
}

/* sheet */
.sheet {
  width: 1097px;
  table-layout: fixed;
  border-collapse: separate;
  border-spacing: 0;
  font-family: "Lato", "Liberation Sans", sans-serif;
  font-size: 13.500px;
  color: #111;
  background-color: #fff;
}

.c-head { width: 26px; }
.c-a { width: 101px; }
.c-b { width: 107px; }
.c-c { width: 82px; }
.c-d { width: 87px; }
.c-e { width: 98px; }
.c-f { width: 102px; }
.c-g { width: 100px; }
.c-h { width: 110px; }
.c-i { width: 95px; }
.c-j { width: 119px; }
.c-k { width: 70px; }

.sheet th, .sheet td {
  height: 20px;
  padding: 0;
  overflow: hidden;
  white-space: nowrap;
}

.letters th {
  background-color: #efefef;
  border-right: 1px solid #c4c4c4;
  border-bottom: 1px solid #b0b0b0;
  font-weight: 400;
  color: #222;
}

.letters .sel-col {
  background-color: #d2d2d2;
  border-bottom: 2px solid #217346;
  color: #107c41;
}

.corner {
  position: relative;
}

.corner span {
  position: absolute;
  right: 3px;
  bottom: 3px;
  border-style: solid;
  border-width: 0 0 12px 12px;
  border-color: transparent transparent #c0c0c0 transparent;
}

.titles th {
  background-color: #156082;
  color: #fff;
  font-weight: 700;
}

.titles .rownum-plain {
  background-color: #efefef;
  color: #111;
  font-weight: 400;
  border-right: 1px solid #b0b0b0;
  border-bottom: 1px solid #c4c4c4;
}

.tt {
  display: flex;
  align-items: center;
  height: 20px;
  padding: 0 1px 0 18px;
}

.tt span {
  flex: 1;
  text-align: center;
}

.fb {
  position: relative;
  flex: none;
  width: 16px;
  height: 16px;
  background-color: #f4f4f4;
  border: 1px solid #c8c8c8;
}

.fb::after {
  content: "";
  position: absolute;
  left: 3px;
  top: 5px;
  border-style: solid;
  border-width: 4px 4px 0;
  border-color: #666 transparent transparent;
}

.rownum {
  background-color: #d2d2d2;
  border-bottom: 1px solid #b5b5b5;
  color: #107c41;
  font-weight: 400;
}

.sheet td {
  padding: 0 2px;
  border-bottom: 1px solid #5ea9d3;
  border-right: 1px solid #dcdcdc;
}

.band td {
  background-color: #bde3f3;
  border-right-color: #cbe7f3;
}

.sheet td.id {
  font-size: 13px;
  letter-spacing: -.4px;
}

.r {
  text-align: right;
  padding-right: 3px !important;
}

.sheet td.u {
  background-color: #c8c8c8;
}

.sheet .band td.u {
  background-color: #96b1bf;
}

.sheet td.u-top {
  background-color: #9dbc9e;
  color: #0a5a12;
}

.sheet td.u-low {
  background-color: #c79aa1;
  color: #8a1019;
}

.sheet td.s-268 { background-color: #b1cf7e; }
.sheet td.s-147 { background-color: #ffdd82; }
.sheet td.s-288 { background-color: #b5d77f; }
.sheet td.s-43 { background-color: #fb8a72; }
.sheet td.s-14 { background-color: #f8696b; }

.bar {
  background-image: linear-gradient(#63be7b, #63be7b);
  background-repeat: no-repeat;
  background-position: 0 1px;
}

/* things lying over the sheet */
.selection {
  position: absolute;
  left: 500px;
  top: 215px;
  width: 104px;
  height: 300px;
  border: 2px solid #217346;
  box-shadow: inset 0 0 0 1px #fff;
}

.row-edge {
  position: absolute;
  left: 25px;
  top: 216px;
  width: 1px;
  height: 294px;
  background-color: #217346;
}

.watermark {
  position: absolute;
  left: 498px;
  top: 464px;
  display: flex;
  gap: 4px;
  width: 142px;
  height: 31px;
  background-color: rgba(255, 255, 255, .35);
}

.wm-text {
  display: flex;
  flex-direction: column;
  align-items: center;
  font-family: "Lato", sans-serif;
  line-height: 1;
}

.wm-name {
  color: #8fa6e0;
  font-size: 23px;
  font-weight: 700;
  opacity: .75;
}

.wm-sub {
  margin-top: -2px;
  color: #8b95a3;
  font-size: 8px;
  letter-spacing: 1.500px;
  opacity: .8;
}

.arrow {
  position: absolute;
}

.arrow-one {
  left: 454px;
  top: 218px;
}

.arrow-two {
  left: 457px;
  top: 364px;
}

/* menus */
.menu, .submenu {
  position: absolute;
  background-color: #fff;
  border: 1px solid #b5b5b5;
  border-radius: 5px;
  box-shadow: 0 2px 5px rgba(0, 0, 0, .3);
  white-space: nowrap;
}

.menu {
  left: 732px;
  top: 116px;
  width: 187px;
  height: 302px;
  padding-top: 2px;
}

.submenu {
  left: 918px;
  top: 160px;
  width: 179px;
  height: 285px;
  border-radius: 5px 5px 0 5px;
}

.m-item {
  position: relative;
  display: flex;
  align-items: center;
  height: 42px;
  padding-left: 14px;
}

.m-hover {
  margin-bottom: 3px;
  background-color: #f3f3f3;
}

.m-ico {
  flex: none;
  margin-top: 3px;
}

.m-text {
  margin: -2px 0 0 3px;
  font-weight: 600;
  font-size: 11.300px;
  color: #333;
}

.m-arrow {
  position: absolute;
  right: 10px;
  top: 50%;
  width: 7px;
  height: 7px;
  margin-top: -5px;
  border-top: 1px solid #333;
  border-right: 1px solid #333;
  transform: rotate(45deg);
}

.badge {
  position: absolute;
  left: 26px;
  top: 21px;
  width: 17px;
  font-size: 11px;
  font-weight: 400;
  line-height: 15px;
  text-align: center;
  color: #555;
}

.badge-x {
  font-family: "Liberation Serif", serif;
  font-style: italic;
}

.m-line {
  height: 1px;
  margin: 0 0 0 1px;
  background-color: #d0d0d0;
}

.m-small {
  position: relative;
  display: flex;
  align-items: center;
  gap: 9px;
  height: 28px;
  padding-left: 13px;
  font-size: 11.500px;
}

.m-small-text {
  margin-top: -2px;
}

.s-line {
  margin-top: 2px;
}

.s-more {
  height: 28px;
  padding: 6px 0 0 37px;
  font-size: 11.500px;
}

/* red boxes */
.mark {
  position: absolute;
  border: 3px solid #e80000;
}

.mark-home {
  left: 54px;
  top: 9px;
  width: 60px;
  height: 29px;
}

.mark-cf {
  left: 732px;
  top: 36px;
  width: 78px;
  height: 84px;
}

.mark-topbottom {
  left: 732px;
  top: 163px;
  width: 153px;
  height: 37px;
}

.mark-top10 {
  left: 922px;
  top: 209px;
  width: 120px;
  height: 33px;
}

.mark-bottom10 {
  left: 924px;
  top: 291px;
  width: 130px;
  height: 40px;
}
```
